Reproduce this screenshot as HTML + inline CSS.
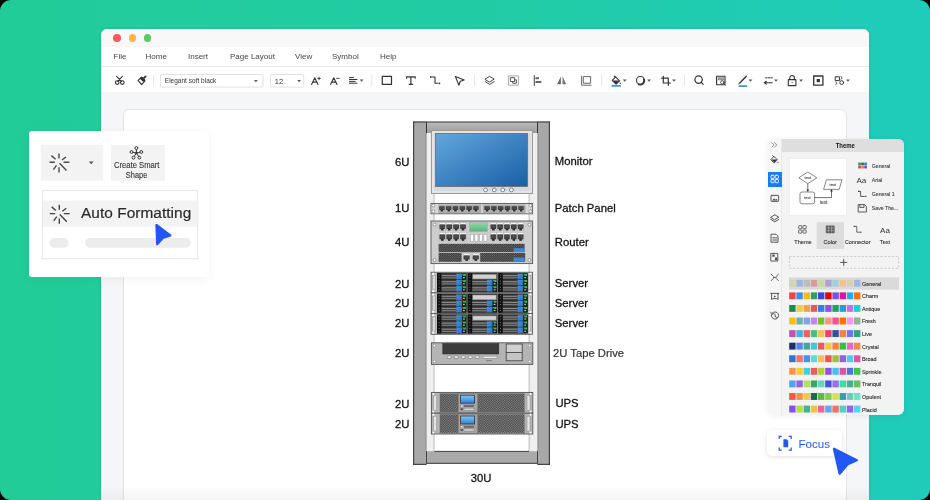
<!DOCTYPE html>
<html><head><meta charset="utf-8">
<style>
*{margin:0;padding:0;box-sizing:border-box}
html,body{width:930px;height:500px;overflow:hidden;background:#000}
body{font-family:"Liberation Sans",sans-serif;position:relative}
.abs{position:absolute}
svg,#menu{will-change:transform}
#bg{position:absolute;left:0;top:0;width:930px;height:500px;border-radius:11px;background:linear-gradient(90deg,#22cc98 0%,#21cca6 55%,#1fccbb 100%)}
#win{position:absolute;left:101px;top:29px;width:768.3px;height:480px;background:#fff;border-radius:6px 6px 0 0;overflow:hidden;box-shadow:0 0 3px rgba(0,0,0,0.12)}
#title{position:absolute;left:0;top:0;width:769px;height:18px;background:#f8f8f8}
.dot{position:absolute;top:5.2px;width:7.4px;height:7.4px;border-radius:50%}
#menu{position:absolute;left:0;top:18px;width:769px;height:20px;background:#fff;border-bottom:1px solid #e8e8e8}
#menu span{position:absolute;top:5px;font-size:8px;color:#444;line-height:10px}
#tool{position:absolute;left:0;top:38px;width:769px;height:25px;background:#fff}
#canvas{position:absolute;left:0;top:63px;width:769px;height:420px;background:#f5f6f8}
#paper{position:absolute;left:22px;top:17px;width:723.6px;height:420px;background:#fff;border:1px solid #e3e3e3;border-radius:6px}
</style></head><body>
<div id="bg"></div>
<div id="win">
  <div id="title">
    <div class="dot" style="left:12.2px;background:#fe5b5a"></div>
    <div class="dot" style="left:27.7px;background:#feb34c"></div>
    <div class="dot" style="left:42.8px;background:#5bc95f"></div>
  </div>
  <div id="menu">
    <span style="left:12.5px">File</span>
    <span style="left:44.5px">Home</span>
    <span style="left:87px">Insert</span>
    <span style="left:129px">Page Layout</span>
    <span style="left:194px">View</span>
    <span style="left:231px">Symbol</span>
    <span style="left:279px">Help</span>
  </div>
  <div id="tool"></div>
  <div id="canvas"><div id="paper"></div></div>
  <div style="position:absolute;left:0;top:457px;width:768.3px;height:14px;background:linear-gradient(180deg,rgba(0,0,0,0) 0%,rgba(0,0,0,0.045) 100%)"></div>
</div>

<svg class="abs" style="left:0;top:0" width="930" height="500" viewBox="0 0 930 500">
<g fill="none" stroke="#333" stroke-width="1.1" stroke-linecap="round" stroke-linejoin="round">
 <!-- scissors -->
 <path d="M116.6 76.4 L121.6 81.4 M122.4 76.4 L117.6 81.4"/>
 <circle cx="117.2" cy="82.6" r="1.8"/><circle cx="122.3" cy="82.6" r="1.8"/>
 <!-- brush -->
 <path d="M138 80.3 L141.4 77.3 L144.9 80.9 L141.6 84.6 Z"/>
 <path d="M140.3 78.4 L143.2 81.2 L144.8 80.2 L141.8 77.1 Z" fill="#333"/>
 <path d="M143.4 78.6 L145.6 76.4" stroke-width="1.8"/>
 <!-- A+ -->
 <path d="M311.6 84.4 L314.8 77.8 L318 84.4 M312.9 82.1 L316.7 82.1"/>
 <path d="M317.8 78.5 H320.3 M319.05 77.25 V79.75" stroke-width="0.9"/>
 <path d="M330.6 84.4 L333.8 77.8 L337 84.4 M331.9 82.1 L335.7 82.1"/>
 <path d="M336.6 78.4 H339.2" stroke-width="0.9"/>
 <!-- align -->
 <path d="M349.4 77.6 H353.4 M349.4 79.5 H357 M349.4 81.4 H355.2 M349.4 83.2 H357" stroke-width="1"/>
 <!-- rect -->
 <rect x="382.3" y="76.4" width="9.2" height="8" stroke-width="1.2"/>
 <!-- T -->
 <path d="M406.6 78.2 V76.9 H415.2 V78.2 M410.9 76.9 V84.4 M409.2 84.4 H412.6" stroke-width="1.2"/>
 <!-- connector -->
 <path d="M432.2 77 H435 V83.3 H437.6" stroke-width="1.1"/>
 <rect x="430" y="76.2" width="1.6" height="1.6" fill="#333" stroke="none"/>
 <rect x="438.6" y="82.6" width="1.6" height="1.6" fill="#333" stroke="none"/>
 <!-- pointer -->
 <path d="M455.4 76.6 L464.2 79.9 L460.3 81.3 L458.9 85.2 Z" stroke-width="1.1"/>
 <!-- layers -->
 <path d="M485.2 79.1 L489.7 76.3 L494.2 79.1 L489.7 81.9 Z M485.2 81.6 L489.7 84.4 L494.2 81.6" stroke="#444" stroke-width="1"/>
 <!-- group -->
 <rect x="508.8" y="75.9" width="9.6" height="9.3" stroke="#aaa" stroke-width="1"/>
 <rect x="510.8" y="77.7" width="3.8" height="3.8" stroke="#555" stroke-width="1"/>
 <path d="M514.6 79.8 H516.4 V83.3 H512.8 V81.5" stroke="#555" stroke-width="1"/>
 <!-- align left -->
 <path d="M534.3 75.6 V85.4" stroke="#555" stroke-width="1.1"/>
 <rect x="535.4" y="77.2" width="3.6" height="2" fill="#666" stroke="none"/>
 <rect x="535.4" y="81" width="6" height="2" fill="#666" stroke="none"/>
 <!-- flip -->
 <path d="M557.1 84.3 L560.9 76.6 V84.3 Z" fill="#666" stroke="none"/>
 <path d="M562.5 76.6 L566.3 84.3 H562.5 Z" fill="#777" stroke="none"/>
 <!-- frame -->
 <path d="M581.6 76.2 V85.2 H591" stroke="#666" stroke-width="1"/>
 <rect x="583.7" y="76.6" width="6.9" height="6.6" stroke="#666" stroke-width="1"/>
 <!-- fill bucket -->
 <path d="M612.2 80.3 L615.6 76.9 L619.5 80.8 L616.1 84.2 Z" stroke-width="1.1"/>
 <path d="M612.4 80.4 H619.3 L616.1 83.8 Z" fill="#333" stroke="none"/>
 <path d="M614.3 76.2 L615.6 77.4" />
 <circle cx="620.3" cy="83.2" r="0.7" fill="#333" stroke="none"/>
 <!-- shadow -->
 <circle cx="640.4" cy="80.4" r="3.9" stroke-width="1.1"/>
 <path d="M643.9 79.2 A3.9 3.9 0 0 1 638.6 84.2" stroke-width="1.8"/>
 <!-- crop -->
 <path d="M661.7 78.2 H668.3 V85.3 M663.3 76.3 V83 H670.4" stroke-width="1.2"/>
 <!-- search -->
 <circle cx="698.6" cy="79.6" r="3.7" stroke-width="1.2"/>
 <path d="M701.3 82.4 L703.2 84.3" stroke-width="1.2"/>
 <!-- zoom page -->
 <rect x="716.6" y="76.3" width="8.4" height="8.4" stroke-width="1.1"/>
 <rect x="717.6" y="77.3" width="6.4" height="3" fill="#999" stroke="none"/>
 <circle cx="722.4" cy="82.4" r="1.7" stroke-width="0.9" fill="#fff"/>
 <path d="M723.6 83.6 L725.3 85" stroke-width="0.9"/>
 <!-- pen -->
 <path d="M739.3 83.5 L746.3 76.3" stroke-width="1.4"/>
 <path d="M738.6 84.2 L739.8 83" stroke="#888" stroke-width="1"/>
 <!-- line style -->
 <path d="M765.5 77.8 H767 M768.2 77.8 H769.7 M770.9 77.8 H772.4" stroke-width="1"/>
 <path d="M764.3 82.7 H772.3 M766.3 81.3 L764.3 82.7 L766.3 84.1" stroke-width="1.1"/>
 <!-- lock -->
 <rect x="788.3" y="79.6" width="7.6" height="6" stroke-width="1.1"/>
 <path d="M789.8 79.6 V77.8 A2.3 2.3 0 0 1 794.4 77.8 V79.6" stroke-width="1.1"/>
 <circle cx="792.1" cy="82.5" r="0.6" fill="#333" stroke="none"/>
 <!-- focus -->
 <rect x="813.7" y="76" width="9.2" height="9.2" stroke-width="1.3"/>
 <rect x="816.7" y="79" width="3.2" height="3.2" fill="#333" stroke="none"/>
 <!-- replace -->
 <rect x="835.6" y="76.8" width="3.8" height="3.8" stroke-width="1"/>
 <circle cx="841.7" cy="82.6" r="1.9" stroke-width="1"/>
 <path d="M841 76.5 L842.2 78 L841 79.3 M835.8 82 L837 83.3 L835.8 84.4" stroke-width="0.9"/>
</g>
<g fill="#555">
 <path d="M254.00 80.00 H257.80 L255.90 82.20 Z"/>
 <path d="M297.20 80.00 H301.00 L299.10 82.20 Z"/>
 <path d="M359.70 79.50 H363.50 L361.60 81.70 Z"/>
 <path d="M622.80 79.50 H626.60 L624.70 81.70 Z"/>
 <path d="M647.10 79.50 H650.90 L649.00 81.70 Z"/>
 <path d="M672.10 79.50 H675.90 L674.00 81.70 Z"/>
 <path d="M748.60 79.50 H752.40 L750.50 81.70 Z"/>
 <path d="M774.10 79.50 H777.90 L776.00 81.70 Z"/>
 <path d="M799.10 79.50 H802.90 L801.00 81.70 Z"/>
 <path d="M846.10 79.50 H849.90 L848.00 81.70 Z"/>
</g>
<g stroke="#e6e6e6" stroke-width="1">
 <path d="M153.5 75 V86 M371.8 75 V86 M474.6 75 V86 M601.7 75 V86 M684.5 75 V86"/>
</g>
<rect x="160.5" y="74.5" width="102.6" height="12.6" rx="1.5" fill="none" stroke="#e2e2e2"/>
<rect x="270.5" y="74.5" width="33.2" height="12.6" rx="1.5" fill="none" stroke="#e2e2e2"/>
<text x="164.8" y="83.3" font-size="7.5" fill="#333" font-family="Liberation Sans" textLength="51.5" lengthAdjust="spacingAndGlyphs">Elegant soft black</text>
<text x="274.8" y="83.6" font-size="7.4" fill="#333" font-family="Liberation Sans">12</text>
<rect x="611.6" y="85.2" width="9.2" height="1.4" fill="#1a73e8"/>
<rect x="738.6" y="85.4" width="8.6" height="1.4" fill="#1a73e8"/>
</svg>
<!--RACK--><svg class="abs" style="left:0;top:0" width="930" height="500" viewBox="0 0 930 500">
<defs>
<linearGradient id="scr" x1="0" y1="0" x2="1" y2="1"><stop offset="0" stop-color="#62a8dc"/><stop offset="1" stop-color="#1a5ea6"/></linearGradient>
<linearGradient id="topbar" x1="0" y1="0" x2="0" y2="1"><stop offset="0" stop-color="#bdbdbd"/><stop offset="1" stop-color="#9c9c9c"/></linearGradient>
<linearGradient id="tag" x1="0" y1="0" x2="1" y2="1"><stop offset="0" stop-color="#4a93d8"/><stop offset="1" stop-color="#2a6fbd"/></linearGradient>
<linearGradient id="lcd" x1="0" y1="0" x2="0" y2="1"><stop offset="0" stop-color="#8fd6a4"/><stop offset="1" stop-color="#5cb67a"/></linearGradient>
<linearGradient id="blcd" x1="0" y1="0" x2="0" y2="1"><stop offset="0" stop-color="#7cc4f5"/><stop offset="1" stop-color="#2f86d6"/></linearGradient>
<pattern id="mesh" width="2.4" height="2.4" patternUnits="userSpaceOnUse"><rect width="2.4" height="2.4" fill="#8e8e8e"/><circle cx="0.6" cy="0.6" r="0.72" fill="#3e3e3e"/><circle cx="1.8" cy="1.8" r="0.72" fill="#3e3e3e"/></pattern><pattern id="mesh2" width="2.2" height="2.2" patternUnits="userSpaceOnUse"><rect width="2.2" height="2.2" fill="#7a7a7a"/><circle cx="0.55" cy="0.55" r="0.7" fill="#2e2e2e"/><circle cx="1.65" cy="1.65" r="0.7" fill="#2e2e2e"/></pattern>
</defs>
<rect x="426.5" y="133" width="111" height="318" fill="#fff"/>
<rect x="426.5" y="133" width="7.2" height="318" fill="#efefef"/>
<rect x="529.5" y="133" width="8" height="318" fill="#efefef"/>
<rect x="433.4" y="133" width="1.2" height="318" fill="#c4c4c4"/>
<rect x="528.6" y="133" width="1.2" height="318" fill="#c4c4c4"/>
<rect x="413" y="121.5" width="13.5" height="343.3" fill="#a8a8a8"/>
<rect x="537.5" y="121.5" width="12.5" height="343.3" fill="#a8a8a8"/>
<path d="M413.6 121.5 V464.4 H426.5" stroke="#444" stroke-width="1.2" fill="none"/>
<path d="M549.4 121.5 V464.4 H537.5" stroke="#444" stroke-width="1.2" fill="none"/>
<path d="M425.9 133 V451" stroke="#8e8e8e" stroke-width="1" fill="none"/>
<path d="M538.1 133 V451" stroke="#8e8e8e" stroke-width="1" fill="none"/>
<rect x="426.5" y="122" width="111" height="11" fill="url(#topbar)"/>
<path d="M413.5 122 H549.5" stroke="#333" stroke-width="1.2"/>
<path d="M426.5 122 V133 M537.5 122 V133" stroke="#333" stroke-width="1"/>
<rect x="426.5" y="451.2" width="111" height="12" fill="#a9a9a9"/>
<path d="M434.5 451.4 H529 M426.5 451 V464 M537.5 451 V464" stroke="#444" stroke-width="1"/>
<path d="M426.5 463.3 H537.5" stroke="#555" stroke-width="1.2"/>
<rect x="431.5" y="130.5" width="101" height="63" fill="#d9d9d9" stroke="#9a9a9a" stroke-width="1"/>
<rect x="433" y="132" width="98" height="60" fill="none" stroke="#efefef" stroke-width="1"/>
<rect x="435.5" y="133.5" width="92" height="53" fill="url(#scr)" stroke="#6a6a6a" stroke-width="0.8"/>
<circle cx="485.6" cy="189.9" r="1.9" fill="#fff" stroke="#555" stroke-width="0.7"/>
<circle cx="494.2" cy="189.9" r="1.9" fill="#fff" stroke="#555" stroke-width="0.7"/>
<circle cx="502.8" cy="189.9" r="1.9" fill="#fff" stroke="#555" stroke-width="0.7"/>
<circle cx="511.4" cy="189.9" r="1.9" fill="#fff" stroke="#555" stroke-width="0.7"/>
<rect x="431" y="203.4" width="101.6" height="10.4" fill="#cfcfcf" stroke="#555" stroke-width="0.9"/>
<rect x="431.5" y="204" width="6.5" height="9.3" fill="#d6d6d6"/>
<rect x="525.6" y="204" width="6.5" height="9.3" fill="#d6d6d6"/>
<circle cx="433.3" cy="205.5" r="1.5" fill="#fff" stroke="#666" stroke-width="0.6"/>
<circle cx="433.3" cy="211.3" r="1.5" fill="#fff" stroke="#666" stroke-width="0.6"/>
<circle cx="530.4" cy="205.5" r="1.5" fill="#fff" stroke="#666" stroke-width="0.6"/>
<circle cx="530.4" cy="211.3" r="1.5" fill="#fff" stroke="#666" stroke-width="0.6"/>
<rect x="438.4" y="204.6" width="87" height="8.6" fill="#a9a9a9"/>
<rect x="481.2" y="204.6" width="1.4" height="8.6" fill="#e4e4e4"/>
<rect x="439.2" y="206.2" width="5.4" height="3.85" rx="0.7" fill="#3c3c3c"/><rect x="439.9" y="206.89999999999998" width="4.0" height="2.45" fill="#4a4a4a"/><rect x="440.66" y="209.84" width="2.48" height="1.56" fill="#2a2a2a"/><rect x="439.40" y="210.70" width="1.1" height="0.7" fill="#e0e0e0"/><rect x="443.30" y="210.70" width="1.1" height="0.7" fill="#e0e0e0"/>
<rect x="484.4" y="206.2" width="5.4" height="3.85" rx="0.7" fill="#3c3c3c"/><rect x="485.09999999999997" y="206.89999999999998" width="4.0" height="2.45" fill="#4a4a4a"/><rect x="485.86" y="209.84" width="2.48" height="1.56" fill="#2a2a2a"/><rect x="484.60" y="210.70" width="1.1" height="0.7" fill="#e0e0e0"/><rect x="488.50" y="210.70" width="1.1" height="0.7" fill="#e0e0e0"/>
<rect x="446.0" y="206.2" width="5.4" height="3.85" rx="0.7" fill="#3c3c3c"/><rect x="446.7" y="206.89999999999998" width="4.0" height="2.45" fill="#4a4a4a"/><rect x="447.46" y="209.84" width="2.48" height="1.56" fill="#2a2a2a"/><rect x="446.20" y="210.70" width="1.1" height="0.7" fill="#e0e0e0"/><rect x="450.10" y="210.70" width="1.1" height="0.7" fill="#e0e0e0"/>
<rect x="491.2" y="206.2" width="5.4" height="3.85" rx="0.7" fill="#3c3c3c"/><rect x="491.9" y="206.89999999999998" width="4.0" height="2.45" fill="#4a4a4a"/><rect x="492.66" y="209.84" width="2.48" height="1.56" fill="#2a2a2a"/><rect x="491.40" y="210.70" width="1.1" height="0.7" fill="#e0e0e0"/><rect x="495.30" y="210.70" width="1.1" height="0.7" fill="#e0e0e0"/>
<rect x="452.8" y="206.2" width="5.4" height="3.85" rx="0.7" fill="#3c3c3c"/><rect x="453.5" y="206.89999999999998" width="4.0" height="2.45" fill="#4a4a4a"/><rect x="454.26" y="209.84" width="2.48" height="1.56" fill="#2a2a2a"/><rect x="453.00" y="210.70" width="1.1" height="0.7" fill="#e0e0e0"/><rect x="456.90" y="210.70" width="1.1" height="0.7" fill="#e0e0e0"/>
<rect x="498.0" y="206.2" width="5.4" height="3.85" rx="0.7" fill="#3c3c3c"/><rect x="498.7" y="206.89999999999998" width="4.0" height="2.45" fill="#4a4a4a"/><rect x="499.46" y="209.84" width="2.48" height="1.56" fill="#2a2a2a"/><rect x="498.20" y="210.70" width="1.1" height="0.7" fill="#e0e0e0"/><rect x="502.10" y="210.70" width="1.1" height="0.7" fill="#e0e0e0"/>
<rect x="459.59999999999997" y="206.2" width="5.4" height="3.85" rx="0.7" fill="#3c3c3c"/><rect x="460.29999999999995" y="206.89999999999998" width="4.0" height="2.45" fill="#4a4a4a"/><rect x="461.06" y="209.84" width="2.48" height="1.56" fill="#2a2a2a"/><rect x="459.80" y="210.70" width="1.1" height="0.7" fill="#e0e0e0"/><rect x="463.70" y="210.70" width="1.1" height="0.7" fill="#e0e0e0"/>
<rect x="504.79999999999995" y="206.2" width="5.4" height="3.85" rx="0.7" fill="#3c3c3c"/><rect x="505.49999999999994" y="206.89999999999998" width="4.0" height="2.45" fill="#4a4a4a"/><rect x="506.26" y="209.84" width="2.48" height="1.56" fill="#2a2a2a"/><rect x="505.00" y="210.70" width="1.1" height="0.7" fill="#e0e0e0"/><rect x="508.90" y="210.70" width="1.1" height="0.7" fill="#e0e0e0"/>
<rect x="466.4" y="206.2" width="5.4" height="3.85" rx="0.7" fill="#3c3c3c"/><rect x="467.09999999999997" y="206.89999999999998" width="4.0" height="2.45" fill="#4a4a4a"/><rect x="467.86" y="209.84" width="2.48" height="1.56" fill="#2a2a2a"/><rect x="466.60" y="210.70" width="1.1" height="0.7" fill="#e0e0e0"/><rect x="470.50" y="210.70" width="1.1" height="0.7" fill="#e0e0e0"/>
<rect x="511.59999999999997" y="206.2" width="5.4" height="3.85" rx="0.7" fill="#3c3c3c"/><rect x="512.3" y="206.89999999999998" width="4.0" height="2.45" fill="#4a4a4a"/><rect x="513.06" y="209.84" width="2.48" height="1.56" fill="#2a2a2a"/><rect x="511.80" y="210.70" width="1.1" height="0.7" fill="#e0e0e0"/><rect x="515.70" y="210.70" width="1.1" height="0.7" fill="#e0e0e0"/>
<rect x="473.2" y="206.2" width="5.4" height="3.85" rx="0.7" fill="#3c3c3c"/><rect x="473.9" y="206.89999999999998" width="4.0" height="2.45" fill="#4a4a4a"/><rect x="474.66" y="209.84" width="2.48" height="1.56" fill="#2a2a2a"/><rect x="473.40" y="210.70" width="1.1" height="0.7" fill="#e0e0e0"/><rect x="477.30" y="210.70" width="1.1" height="0.7" fill="#e0e0e0"/>
<rect x="518.4" y="206.2" width="5.4" height="3.85" rx="0.7" fill="#3c3c3c"/><rect x="519.1" y="206.89999999999998" width="4.0" height="2.45" fill="#4a4a4a"/><rect x="519.86" y="209.84" width="2.48" height="1.56" fill="#2a2a2a"/><rect x="518.60" y="210.70" width="1.1" height="0.7" fill="#e0e0e0"/><rect x="522.50" y="210.70" width="1.1" height="0.7" fill="#e0e0e0"/>
<rect x="431" y="221" width="101.6" height="42.6" fill="#cdcdcd" stroke="#555" stroke-width="0.9"/>
<circle cx="434.6" cy="224.6" r="1.5" fill="#fff" stroke="#666" stroke-width="0.6"/>
<circle cx="434.6" cy="260" r="1.5" fill="#fff" stroke="#666" stroke-width="0.6"/>
<circle cx="529.4" cy="224.6" r="1.5" fill="#fff" stroke="#666" stroke-width="0.6"/>
<circle cx="529.4" cy="260" r="1.5" fill="#fff" stroke="#666" stroke-width="0.6"/>
<rect x="438.9" y="222.6" width="6.8" height="8.4" fill="#b9b9b9"/><rect x="439.5" y="223.0" width="5.6" height="1.2" fill="#f6f6f6"/><rect x="439.5" y="224.6" width="5.6" height="4.29" rx="0.7" fill="#3c3c3c"/><rect x="440.2" y="225.29999999999998" width="4.199999999999999" height="2.89" fill="#4a4a4a"/><rect x="441.01" y="228.66" width="2.58" height="1.74" fill="#2a2a2a"/><rect x="439.70" y="229.70" width="1.1" height="0.7" fill="#e0e0e0"/><rect x="443.80" y="229.70" width="1.1" height="0.7" fill="#e0e0e0"/>
<rect x="438.9" y="232.4" width="6.8" height="9.0" fill="#b9b9b9"/><rect x="439.5" y="232.8" width="5.6" height="1.2" fill="#f6f6f6"/><rect x="439.5" y="234.4" width="5.6" height="4.74" rx="0.7" fill="#3c3c3c"/><rect x="440.2" y="235.1" width="4.199999999999999" height="3.34" fill="#4a4a4a"/><rect x="441.01" y="238.88" width="2.58" height="1.92" fill="#2a2a2a"/><rect x="439.70" y="240.10" width="1.1" height="0.7" fill="#e0e0e0"/><rect x="443.80" y="240.10" width="1.1" height="0.7" fill="#e0e0e0"/>
<rect x="445.79999999999995" y="222.6" width="6.8" height="8.4" fill="#b9b9b9"/><rect x="446.4" y="223.0" width="5.6" height="1.2" fill="#f6f6f6"/><rect x="446.4" y="224.6" width="5.6" height="4.29" rx="0.7" fill="#3c3c3c"/><rect x="447.09999999999997" y="225.29999999999998" width="4.199999999999999" height="2.89" fill="#4a4a4a"/><rect x="447.91" y="228.66" width="2.58" height="1.74" fill="#2a2a2a"/><rect x="446.60" y="229.70" width="1.1" height="0.7" fill="#e0e0e0"/><rect x="450.70" y="229.70" width="1.1" height="0.7" fill="#e0e0e0"/>
<rect x="445.79999999999995" y="232.4" width="6.8" height="9.0" fill="#b9b9b9"/><rect x="446.4" y="232.8" width="5.6" height="1.2" fill="#f6f6f6"/><rect x="446.4" y="234.4" width="5.6" height="4.74" rx="0.7" fill="#3c3c3c"/><rect x="447.09999999999997" y="235.1" width="4.199999999999999" height="3.34" fill="#4a4a4a"/><rect x="447.91" y="238.88" width="2.58" height="1.92" fill="#2a2a2a"/><rect x="446.60" y="240.10" width="1.1" height="0.7" fill="#e0e0e0"/><rect x="450.70" y="240.10" width="1.1" height="0.7" fill="#e0e0e0"/>
<rect x="452.7" y="222.6" width="6.8" height="8.4" fill="#b9b9b9"/><rect x="453.3" y="223.0" width="5.6" height="1.2" fill="#f6f6f6"/><rect x="453.3" y="224.6" width="5.6" height="4.29" rx="0.7" fill="#3c3c3c"/><rect x="454.0" y="225.29999999999998" width="4.199999999999999" height="2.89" fill="#4a4a4a"/><rect x="454.81" y="228.66" width="2.58" height="1.74" fill="#2a2a2a"/><rect x="453.50" y="229.70" width="1.1" height="0.7" fill="#e0e0e0"/><rect x="457.60" y="229.70" width="1.1" height="0.7" fill="#e0e0e0"/>
<rect x="452.7" y="232.4" width="6.8" height="9.0" fill="#b9b9b9"/><rect x="453.3" y="232.8" width="5.6" height="1.2" fill="#f6f6f6"/><rect x="453.3" y="234.4" width="5.6" height="4.74" rx="0.7" fill="#3c3c3c"/><rect x="454.0" y="235.1" width="4.199999999999999" height="3.34" fill="#4a4a4a"/><rect x="454.81" y="238.88" width="2.58" height="1.92" fill="#2a2a2a"/><rect x="453.50" y="240.10" width="1.1" height="0.7" fill="#e0e0e0"/><rect x="457.60" y="240.10" width="1.1" height="0.7" fill="#e0e0e0"/>
<rect x="459.59999999999997" y="222.6" width="6.8" height="8.4" fill="#b9b9b9"/><rect x="460.2" y="223.0" width="5.6" height="1.2" fill="#f6f6f6"/><rect x="460.2" y="224.6" width="5.6" height="4.29" rx="0.7" fill="#3c3c3c"/><rect x="460.9" y="225.29999999999998" width="4.199999999999999" height="2.89" fill="#4a4a4a"/><rect x="461.71" y="228.66" width="2.58" height="1.74" fill="#2a2a2a"/><rect x="460.40" y="229.70" width="1.1" height="0.7" fill="#e0e0e0"/><rect x="464.50" y="229.70" width="1.1" height="0.7" fill="#e0e0e0"/>
<rect x="459.59999999999997" y="232.4" width="6.8" height="9.0" fill="#b9b9b9"/><rect x="460.2" y="232.8" width="5.6" height="1.2" fill="#f6f6f6"/><rect x="460.2" y="234.4" width="5.6" height="4.74" rx="0.7" fill="#3c3c3c"/><rect x="460.9" y="235.1" width="4.199999999999999" height="3.34" fill="#4a4a4a"/><rect x="461.71" y="238.88" width="2.58" height="1.92" fill="#2a2a2a"/><rect x="460.40" y="240.10" width="1.1" height="0.7" fill="#e0e0e0"/><rect x="464.50" y="240.10" width="1.1" height="0.7" fill="#e0e0e0"/>
<rect x="490.0" y="222.6" width="6.8" height="8.4" fill="#b9b9b9"/><rect x="490.6" y="223.0" width="5.6" height="1.2" fill="#f6f6f6"/><rect x="490.6" y="224.6" width="5.6" height="4.29" rx="0.7" fill="#3c3c3c"/><rect x="491.3" y="225.29999999999998" width="4.199999999999999" height="2.89" fill="#4a4a4a"/><rect x="492.11" y="228.66" width="2.58" height="1.74" fill="#2a2a2a"/><rect x="490.80" y="229.70" width="1.1" height="0.7" fill="#e0e0e0"/><rect x="494.90" y="229.70" width="1.1" height="0.7" fill="#e0e0e0"/>
<rect x="490.0" y="232.4" width="6.8" height="9.0" fill="#b9b9b9"/><rect x="490.6" y="232.8" width="5.6" height="1.2" fill="#f6f6f6"/><rect x="490.6" y="234.4" width="5.6" height="4.74" rx="0.7" fill="#3c3c3c"/><rect x="491.3" y="235.1" width="4.199999999999999" height="3.34" fill="#4a4a4a"/><rect x="492.11" y="238.88" width="2.58" height="1.92" fill="#2a2a2a"/><rect x="490.80" y="240.10" width="1.1" height="0.7" fill="#e0e0e0"/><rect x="494.90" y="240.10" width="1.1" height="0.7" fill="#e0e0e0"/>
<rect x="496.8" y="222.6" width="6.8" height="8.4" fill="#b9b9b9"/><rect x="497.40000000000003" y="223.0" width="5.6" height="1.2" fill="#f6f6f6"/><rect x="497.40000000000003" y="224.6" width="5.6" height="4.29" rx="0.7" fill="#3c3c3c"/><rect x="498.1" y="225.29999999999998" width="4.199999999999999" height="2.89" fill="#4a4a4a"/><rect x="498.91" y="228.66" width="2.58" height="1.74" fill="#2a2a2a"/><rect x="497.60" y="229.70" width="1.1" height="0.7" fill="#e0e0e0"/><rect x="501.70" y="229.70" width="1.1" height="0.7" fill="#e0e0e0"/>
<rect x="496.8" y="232.4" width="6.8" height="9.0" fill="#b9b9b9"/><rect x="497.40000000000003" y="232.8" width="5.6" height="1.2" fill="#f6f6f6"/><rect x="497.40000000000003" y="234.4" width="5.6" height="4.74" rx="0.7" fill="#3c3c3c"/><rect x="498.1" y="235.1" width="4.199999999999999" height="3.34" fill="#4a4a4a"/><rect x="498.91" y="238.88" width="2.58" height="1.92" fill="#2a2a2a"/><rect x="497.60" y="240.10" width="1.1" height="0.7" fill="#e0e0e0"/><rect x="501.70" y="240.10" width="1.1" height="0.7" fill="#e0e0e0"/>
<rect x="503.6" y="222.6" width="6.8" height="8.4" fill="#b9b9b9"/><rect x="504.20000000000005" y="223.0" width="5.6" height="1.2" fill="#f6f6f6"/><rect x="504.20000000000005" y="224.6" width="5.6" height="4.29" rx="0.7" fill="#3c3c3c"/><rect x="504.90000000000003" y="225.29999999999998" width="4.199999999999999" height="2.89" fill="#4a4a4a"/><rect x="505.71" y="228.66" width="2.58" height="1.74" fill="#2a2a2a"/><rect x="504.40" y="229.70" width="1.1" height="0.7" fill="#e0e0e0"/><rect x="508.50" y="229.70" width="1.1" height="0.7" fill="#e0e0e0"/>
<rect x="503.6" y="232.4" width="6.8" height="9.0" fill="#b9b9b9"/><rect x="504.20000000000005" y="232.8" width="5.6" height="1.2" fill="#f6f6f6"/><rect x="504.20000000000005" y="234.4" width="5.6" height="4.74" rx="0.7" fill="#3c3c3c"/><rect x="504.90000000000003" y="235.1" width="4.199999999999999" height="3.34" fill="#4a4a4a"/><rect x="505.71" y="238.88" width="2.58" height="1.92" fill="#2a2a2a"/><rect x="504.40" y="240.10" width="1.1" height="0.7" fill="#e0e0e0"/><rect x="508.50" y="240.10" width="1.1" height="0.7" fill="#e0e0e0"/>
<rect x="510.4" y="222.6" width="6.8" height="8.4" fill="#b9b9b9"/><rect x="511.0" y="223.0" width="5.6" height="1.2" fill="#f6f6f6"/><rect x="511.0" y="224.6" width="5.6" height="4.29" rx="0.7" fill="#3c3c3c"/><rect x="511.7" y="225.29999999999998" width="4.199999999999999" height="2.89" fill="#4a4a4a"/><rect x="512.51" y="228.66" width="2.58" height="1.74" fill="#2a2a2a"/><rect x="511.20" y="229.70" width="1.1" height="0.7" fill="#e0e0e0"/><rect x="515.30" y="229.70" width="1.1" height="0.7" fill="#e0e0e0"/>
<rect x="510.4" y="232.4" width="6.8" height="9.0" fill="#b9b9b9"/><rect x="511.0" y="232.8" width="5.6" height="1.2" fill="#f6f6f6"/><rect x="511.0" y="234.4" width="5.6" height="4.74" rx="0.7" fill="#3c3c3c"/><rect x="511.7" y="235.1" width="4.199999999999999" height="3.34" fill="#4a4a4a"/><rect x="512.51" y="238.88" width="2.58" height="1.92" fill="#2a2a2a"/><rect x="511.20" y="240.10" width="1.1" height="0.7" fill="#e0e0e0"/><rect x="515.30" y="240.10" width="1.1" height="0.7" fill="#e0e0e0"/>
<rect x="517.2" y="222.6" width="6.8" height="8.4" fill="#b9b9b9"/><rect x="517.8000000000001" y="223.0" width="5.6" height="1.2" fill="#f6f6f6"/><rect x="517.8000000000001" y="224.6" width="5.6" height="4.29" rx="0.7" fill="#3c3c3c"/><rect x="518.5000000000001" y="225.29999999999998" width="4.199999999999999" height="2.89" fill="#4a4a4a"/><rect x="519.31" y="228.66" width="2.58" height="1.74" fill="#2a2a2a"/><rect x="518.00" y="229.70" width="1.1" height="0.7" fill="#e0e0e0"/><rect x="522.10" y="229.70" width="1.1" height="0.7" fill="#e0e0e0"/>
<rect x="517.2" y="232.4" width="6.8" height="9.0" fill="#b9b9b9"/><rect x="517.8000000000001" y="232.8" width="5.6" height="1.2" fill="#f6f6f6"/><rect x="517.8000000000001" y="234.4" width="5.6" height="4.74" rx="0.7" fill="#3c3c3c"/><rect x="518.5000000000001" y="235.1" width="4.199999999999999" height="3.34" fill="#4a4a4a"/><rect x="519.31" y="238.88" width="2.58" height="1.92" fill="#2a2a2a"/><rect x="518.00" y="240.10" width="1.1" height="0.7" fill="#e0e0e0"/><rect x="522.10" y="240.10" width="1.1" height="0.7" fill="#e0e0e0"/>
<rect x="469.2" y="222.4" width="18.6" height="9.4" fill="#a8a8a8"/>
<rect x="470" y="223" width="17" height="8.2" fill="url(#lcd)"/>
<rect x="470.4" y="234.2" width="3" height="7" fill="#fff" stroke="#999" stroke-width="0.5"/>
<rect x="474.9" y="234.2" width="3" height="7" fill="#fff" stroke="#999" stroke-width="0.5"/>
<rect x="479.4" y="234.2" width="3" height="7" fill="#fff" stroke="#999" stroke-width="0.5"/>
<rect x="483.9" y="234.2" width="3" height="7" fill="#fff" stroke="#999" stroke-width="0.5"/>
<rect x="438.6" y="243.8" width="86" height="8.4" fill="url(#mesh2)"/>
<rect x="513.6" y="248.2" width="11" height="3.9" fill="#3b8ddb"/>
<rect x="438.6" y="253" width="23" height="8.8" fill="url(#mesh2)"/>
<rect x="480.2" y="253" width="45" height="8.8" fill="url(#mesh2)"/>
<rect x="513.6" y="257.6" width="11" height="4" fill="#3b8ddb"/>
<rect x="463.0" y="253.4" width="7.2" height="8.0" fill="#b9b9b9"/><rect x="463.6" y="253.8" width="6" height="1.2" fill="#f6f6f6"/><rect x="463.6" y="255.4" width="6" height="4.00" rx="0.7" fill="#3c3c3c"/><rect x="464.3" y="256.1" width="4.6" height="2.60" fill="#4a4a4a"/><rect x="465.22" y="259.18" width="2.76" height="1.62" fill="#2a2a2a"/><rect x="463.80" y="260.10" width="1.1" height="0.7" fill="#e0e0e0"/><rect x="468.30" y="260.10" width="1.1" height="0.7" fill="#e0e0e0"/>
<rect x="472.2" y="253.4" width="7.2" height="8.0" fill="#b9b9b9"/><rect x="472.8" y="253.8" width="6" height="1.2" fill="#f6f6f6"/><rect x="472.8" y="255.4" width="6" height="4.00" rx="0.7" fill="#3c3c3c"/><rect x="473.5" y="256.1" width="4.6" height="2.60" fill="#4a4a4a"/><rect x="474.42" y="259.18" width="2.76" height="1.62" fill="#2a2a2a"/><rect x="473.00" y="260.10" width="1.1" height="0.7" fill="#e0e0e0"/><rect x="477.50" y="260.10" width="1.1" height="0.7" fill="#e0e0e0"/>
<rect x="431" y="272.2" width="101.6" height="20.7" fill="#8e8e8e" stroke="#555" stroke-width="0.8"/>
<rect x="431.6" y="272.8" width="5.4" height="19.5" fill="#c2c2c2"/>
<rect x="432.8" y="275.2" width="2.6" height="14.6" fill="#dadada" stroke="#8a8a8a" stroke-width="0.5"/>
<rect x="527" y="272.8" width="5" height="19.5" fill="#c2c2c2"/>
<rect x="528.2" y="275.2" width="2.6" height="14.6" fill="#dadada" stroke="#8a8a8a" stroke-width="0.5"/>
<circle cx="433.2" cy="273.8" r="1.1" fill="#fff"/><circle cx="433.2" cy="291.2" r="1.1" fill="#fff"/>
<circle cx="530.4" cy="273.8" r="1.1" fill="#fff"/><circle cx="530.4" cy="291.2" r="1.1" fill="#fff"/>
<rect x="437" y="273.2" width="29.6" height="18.8" fill="#222"/>
<rect x="437" y="273.2" width="4.2" height="18.8" fill="#111"/>
<circle cx="439.1" cy="275.0" r="0.5" fill="#888"/><circle cx="439.1" cy="277.6" r="0.5" fill="#888"/>
<rect x="441.6" y="273.8" width="14.6" height="5.6" fill="#3a3a3a"/>
<rect x="441.6" y="275.0" width="14.6" height="1.2" fill="#8a8a8a"/>
<rect x="441.6" y="277.2" width="14.6" height="1.2" fill="#7a7a7a"/>
<rect x="456.2" y="273.8" width="5.8" height="5.6" fill="url(#tag)"/>
<rect x="462" y="273.8" width="4" height="5.6" fill="#1a1a1a"/>
<path d="M462.2 274.0 H465.8 V276.0 H463.4 Z" fill="#2fbf55"/>
<rect x="463" y="277.0" width="1.8" height="1.3" fill="#bbb"/>
<circle cx="439.1" cy="281.1" r="0.5" fill="#888"/><circle cx="439.1" cy="283.70000000000005" r="0.5" fill="#888"/>
<rect x="441.6" y="279.90000000000003" width="14.6" height="5.6" fill="#3a3a3a"/>
<rect x="441.6" y="281.1" width="14.6" height="1.2" fill="#8a8a8a"/>
<rect x="441.6" y="283.3" width="14.6" height="1.2" fill="#7a7a7a"/>
<rect x="456.2" y="279.90000000000003" width="5.8" height="5.6" fill="url(#tag)"/>
<rect x="462" y="279.90000000000003" width="4" height="5.6" fill="#1a1a1a"/>
<path d="M462.2 280.1 H465.8 V282.1 H463.4 Z" fill="#2fbf55"/>
<rect x="463" y="283.1" width="1.8" height="1.3" fill="#bbb"/>
<circle cx="439.1" cy="287.2" r="0.5" fill="#888"/><circle cx="439.1" cy="289.8" r="0.5" fill="#888"/>
<rect x="441.6" y="286.0" width="14.6" height="5.6" fill="#3a3a3a"/>
<rect x="441.6" y="287.2" width="14.6" height="1.2" fill="#8a8a8a"/>
<rect x="441.6" y="289.4" width="14.6" height="1.2" fill="#7a7a7a"/>
<rect x="456.2" y="286.0" width="5.8" height="5.6" fill="url(#tag)"/>
<rect x="462" y="286.0" width="4" height="5.6" fill="#1a1a1a"/>
<path d="M462.2 286.2 H465.8 V288.2 H463.4 Z" fill="#2fbf55"/>
<rect x="463" y="289.2" width="1.8" height="1.3" fill="#bbb"/>
<rect x="467.7" y="273.2" width="29.6" height="18.8" fill="#222"/>
<rect x="467.7" y="273.2" width="4.2" height="18.8" fill="#111"/>
<circle cx="469.8" cy="275.0" r="0.5" fill="#888"/><circle cx="469.8" cy="277.6" r="0.5" fill="#888"/>
<rect x="472.3" y="274.1" width="24.4" height="5.2" fill="#a8a8a8" stroke="#555" stroke-width="0.4"/>
<rect x="473.09999999999997" y="274.90000000000003" width="22.8" height="3.4" fill="#d2d2d2"/>
<circle cx="469.8" cy="281.1" r="0.5" fill="#888"/><circle cx="469.8" cy="283.70000000000005" r="0.5" fill="#888"/>
<rect x="472.3" y="279.90000000000003" width="14.6" height="5.6" fill="#3a3a3a"/>
<rect x="472.3" y="281.1" width="14.6" height="1.2" fill="#8a8a8a"/>
<rect x="472.3" y="283.3" width="14.6" height="1.2" fill="#7a7a7a"/>
<rect x="486.9" y="279.90000000000003" width="5.8" height="5.6" fill="url(#tag)"/>
<rect x="492.7" y="279.90000000000003" width="4" height="5.6" fill="#1a1a1a"/>
<path d="M492.9 280.1 H496.5 V282.1 H494.09999999999997 Z" fill="#2fbf55"/>
<rect x="493.7" y="283.1" width="1.8" height="1.3" fill="#bbb"/>
<circle cx="469.8" cy="287.2" r="0.5" fill="#888"/><circle cx="469.8" cy="289.8" r="0.5" fill="#888"/>
<rect x="472.3" y="286.0" width="14.6" height="5.6" fill="#3a3a3a"/>
<rect x="472.3" y="287.2" width="14.6" height="1.2" fill="#8a8a8a"/>
<rect x="472.3" y="289.4" width="14.6" height="1.2" fill="#7a7a7a"/>
<rect x="486.9" y="286.0" width="5.8" height="5.6" fill="url(#tag)"/>
<rect x="492.7" y="286.0" width="4" height="5.6" fill="#1a1a1a"/>
<path d="M492.9 286.2 H496.5 V288.2 H494.09999999999997 Z" fill="#2fbf55"/>
<rect x="493.7" y="289.2" width="1.8" height="1.3" fill="#bbb"/>
<rect x="498.3" y="273.2" width="29.6" height="18.8" fill="#222"/>
<rect x="498.3" y="273.2" width="4.2" height="18.8" fill="#111"/>
<circle cx="500.40000000000003" cy="275.0" r="0.5" fill="#888"/><circle cx="500.40000000000003" cy="277.6" r="0.5" fill="#888"/>
<rect x="502.90000000000003" y="273.8" width="14.6" height="5.6" fill="#3a3a3a"/>
<rect x="502.90000000000003" y="275.0" width="14.6" height="1.2" fill="#8a8a8a"/>
<rect x="502.90000000000003" y="277.2" width="14.6" height="1.2" fill="#7a7a7a"/>
<rect x="517.5" y="273.8" width="5.8" height="5.6" fill="url(#tag)"/>
<rect x="523.3" y="273.8" width="4" height="5.6" fill="#1a1a1a"/>
<path d="M523.5 274.0 H527.1 V276.0 H524.7 Z" fill="#2fbf55"/>
<rect x="524.3" y="277.0" width="1.8" height="1.3" fill="#bbb"/>
<circle cx="500.40000000000003" cy="281.1" r="0.5" fill="#888"/><circle cx="500.40000000000003" cy="283.70000000000005" r="0.5" fill="#888"/>
<rect x="502.90000000000003" y="279.90000000000003" width="14.6" height="5.6" fill="#3a3a3a"/>
<rect x="502.90000000000003" y="281.1" width="14.6" height="1.2" fill="#8a8a8a"/>
<rect x="502.90000000000003" y="283.3" width="14.6" height="1.2" fill="#7a7a7a"/>
<rect x="517.5" y="279.90000000000003" width="5.8" height="5.6" fill="url(#tag)"/>
<rect x="523.3" y="279.90000000000003" width="4" height="5.6" fill="#1a1a1a"/>
<path d="M523.5 280.1 H527.1 V282.1 H524.7 Z" fill="#2fbf55"/>
<rect x="524.3" y="283.1" width="1.8" height="1.3" fill="#bbb"/>
<circle cx="500.40000000000003" cy="287.2" r="0.5" fill="#888"/><circle cx="500.40000000000003" cy="289.8" r="0.5" fill="#888"/>
<rect x="502.90000000000003" y="286.0" width="14.6" height="5.6" fill="#3a3a3a"/>
<rect x="502.90000000000003" y="287.2" width="14.6" height="1.2" fill="#8a8a8a"/>
<rect x="502.90000000000003" y="289.4" width="14.6" height="1.2" fill="#7a7a7a"/>
<rect x="517.5" y="286.0" width="5.8" height="5.6" fill="url(#tag)"/>
<rect x="523.3" y="286.0" width="4" height="5.6" fill="#1a1a1a"/>
<path d="M523.5 286.2 H527.1 V288.2 H524.7 Z" fill="#2fbf55"/>
<rect x="524.3" y="289.2" width="1.8" height="1.3" fill="#bbb"/>
<rect x="431" y="292.9" width="101.6" height="20.7" fill="#8e8e8e" stroke="#555" stroke-width="0.8"/>
<rect x="431.6" y="293.5" width="5.4" height="19.5" fill="#c2c2c2"/>
<rect x="432.8" y="295.9" width="2.6" height="14.6" fill="#dadada" stroke="#8a8a8a" stroke-width="0.5"/>
<rect x="527" y="293.5" width="5" height="19.5" fill="#c2c2c2"/>
<rect x="528.2" y="295.9" width="2.6" height="14.6" fill="#dadada" stroke="#8a8a8a" stroke-width="0.5"/>
<circle cx="433.2" cy="294.5" r="1.1" fill="#fff"/><circle cx="433.2" cy="311.9" r="1.1" fill="#fff"/>
<circle cx="530.4" cy="294.5" r="1.1" fill="#fff"/><circle cx="530.4" cy="311.9" r="1.1" fill="#fff"/>
<rect x="437" y="293.9" width="29.6" height="18.8" fill="#222"/>
<rect x="437" y="293.9" width="4.2" height="18.8" fill="#111"/>
<circle cx="439.1" cy="295.7" r="0.5" fill="#888"/><circle cx="439.1" cy="298.3" r="0.5" fill="#888"/>
<rect x="441.6" y="294.5" width="14.6" height="5.6" fill="#3a3a3a"/>
<rect x="441.6" y="295.7" width="14.6" height="1.2" fill="#8a8a8a"/>
<rect x="441.6" y="297.9" width="14.6" height="1.2" fill="#7a7a7a"/>
<rect x="456.2" y="294.5" width="5.8" height="5.6" fill="url(#tag)"/>
<rect x="462" y="294.5" width="4" height="5.6" fill="#1a1a1a"/>
<path d="M462.2 294.7 H465.8 V296.7 H463.4 Z" fill="#2fbf55"/>
<rect x="463" y="297.7" width="1.8" height="1.3" fill="#bbb"/>
<circle cx="439.1" cy="301.8" r="0.5" fill="#888"/><circle cx="439.1" cy="304.40000000000003" r="0.5" fill="#888"/>
<rect x="441.6" y="300.6" width="14.6" height="5.6" fill="#3a3a3a"/>
<rect x="441.6" y="301.8" width="14.6" height="1.2" fill="#8a8a8a"/>
<rect x="441.6" y="304.0" width="14.6" height="1.2" fill="#7a7a7a"/>
<rect x="456.2" y="300.6" width="5.8" height="5.6" fill="url(#tag)"/>
<rect x="462" y="300.6" width="4" height="5.6" fill="#1a1a1a"/>
<path d="M462.2 300.8 H465.8 V302.8 H463.4 Z" fill="#2fbf55"/>
<rect x="463" y="303.8" width="1.8" height="1.3" fill="#bbb"/>
<circle cx="439.1" cy="307.9" r="0.5" fill="#888"/><circle cx="439.1" cy="310.5" r="0.5" fill="#888"/>
<rect x="441.6" y="306.7" width="14.6" height="5.6" fill="#3a3a3a"/>
<rect x="441.6" y="307.9" width="14.6" height="1.2" fill="#8a8a8a"/>
<rect x="441.6" y="310.09999999999997" width="14.6" height="1.2" fill="#7a7a7a"/>
<rect x="456.2" y="306.7" width="5.8" height="5.6" fill="url(#tag)"/>
<rect x="462" y="306.7" width="4" height="5.6" fill="#1a1a1a"/>
<path d="M462.2 306.9 H465.8 V308.9 H463.4 Z" fill="#2fbf55"/>
<rect x="463" y="309.9" width="1.8" height="1.3" fill="#bbb"/>
<rect x="467.7" y="293.9" width="29.6" height="18.8" fill="#222"/>
<rect x="467.7" y="293.9" width="4.2" height="18.8" fill="#111"/>
<circle cx="469.8" cy="295.7" r="0.5" fill="#888"/><circle cx="469.8" cy="298.3" r="0.5" fill="#888"/>
<rect x="472.3" y="294.8" width="24.4" height="5.2" fill="#a8a8a8" stroke="#555" stroke-width="0.4"/>
<rect x="473.09999999999997" y="295.6" width="22.8" height="3.4" fill="#d2d2d2"/>
<circle cx="469.8" cy="301.8" r="0.5" fill="#888"/><circle cx="469.8" cy="304.40000000000003" r="0.5" fill="#888"/>
<rect x="472.3" y="300.6" width="14.6" height="5.6" fill="#3a3a3a"/>
<rect x="472.3" y="301.8" width="14.6" height="1.2" fill="#8a8a8a"/>
<rect x="472.3" y="304.0" width="14.6" height="1.2" fill="#7a7a7a"/>
<rect x="486.9" y="300.6" width="5.8" height="5.6" fill="url(#tag)"/>
<rect x="492.7" y="300.6" width="4" height="5.6" fill="#1a1a1a"/>
<path d="M492.9 300.8 H496.5 V302.8 H494.09999999999997 Z" fill="#2fbf55"/>
<rect x="493.7" y="303.8" width="1.8" height="1.3" fill="#bbb"/>
<circle cx="469.8" cy="307.9" r="0.5" fill="#888"/><circle cx="469.8" cy="310.5" r="0.5" fill="#888"/>
<rect x="472.3" y="306.7" width="14.6" height="5.6" fill="#3a3a3a"/>
<rect x="472.3" y="307.9" width="14.6" height="1.2" fill="#8a8a8a"/>
<rect x="472.3" y="310.09999999999997" width="14.6" height="1.2" fill="#7a7a7a"/>
<rect x="486.9" y="306.7" width="5.8" height="5.6" fill="url(#tag)"/>
<rect x="492.7" y="306.7" width="4" height="5.6" fill="#1a1a1a"/>
<path d="M492.9 306.9 H496.5 V308.9 H494.09999999999997 Z" fill="#2fbf55"/>
<rect x="493.7" y="309.9" width="1.8" height="1.3" fill="#bbb"/>
<rect x="498.3" y="293.9" width="29.6" height="18.8" fill="#222"/>
<rect x="498.3" y="293.9" width="4.2" height="18.8" fill="#111"/>
<circle cx="500.40000000000003" cy="295.7" r="0.5" fill="#888"/><circle cx="500.40000000000003" cy="298.3" r="0.5" fill="#888"/>
<rect x="502.90000000000003" y="294.5" width="14.6" height="5.6" fill="#3a3a3a"/>
<rect x="502.90000000000003" y="295.7" width="14.6" height="1.2" fill="#8a8a8a"/>
<rect x="502.90000000000003" y="297.9" width="14.6" height="1.2" fill="#7a7a7a"/>
<rect x="517.5" y="294.5" width="5.8" height="5.6" fill="url(#tag)"/>
<rect x="523.3" y="294.5" width="4" height="5.6" fill="#1a1a1a"/>
<path d="M523.5 294.7 H527.1 V296.7 H524.7 Z" fill="#2fbf55"/>
<rect x="524.3" y="297.7" width="1.8" height="1.3" fill="#bbb"/>
<circle cx="500.40000000000003" cy="301.8" r="0.5" fill="#888"/><circle cx="500.40000000000003" cy="304.40000000000003" r="0.5" fill="#888"/>
<rect x="502.90000000000003" y="300.6" width="14.6" height="5.6" fill="#3a3a3a"/>
<rect x="502.90000000000003" y="301.8" width="14.6" height="1.2" fill="#8a8a8a"/>
<rect x="502.90000000000003" y="304.0" width="14.6" height="1.2" fill="#7a7a7a"/>
<rect x="517.5" y="300.6" width="5.8" height="5.6" fill="url(#tag)"/>
<rect x="523.3" y="300.6" width="4" height="5.6" fill="#1a1a1a"/>
<path d="M523.5 300.8 H527.1 V302.8 H524.7 Z" fill="#2fbf55"/>
<rect x="524.3" y="303.8" width="1.8" height="1.3" fill="#bbb"/>
<circle cx="500.40000000000003" cy="307.9" r="0.5" fill="#888"/><circle cx="500.40000000000003" cy="310.5" r="0.5" fill="#888"/>
<rect x="502.90000000000003" y="306.7" width="14.6" height="5.6" fill="#3a3a3a"/>
<rect x="502.90000000000003" y="307.9" width="14.6" height="1.2" fill="#8a8a8a"/>
<rect x="502.90000000000003" y="310.09999999999997" width="14.6" height="1.2" fill="#7a7a7a"/>
<rect x="517.5" y="306.7" width="5.8" height="5.6" fill="url(#tag)"/>
<rect x="523.3" y="306.7" width="4" height="5.6" fill="#1a1a1a"/>
<path d="M523.5 306.9 H527.1 V308.9 H524.7 Z" fill="#2fbf55"/>
<rect x="524.3" y="309.9" width="1.8" height="1.3" fill="#bbb"/>
<rect x="431" y="313.59999999999997" width="101.6" height="20.7" fill="#8e8e8e" stroke="#555" stroke-width="0.8"/>
<rect x="431.6" y="314.2" width="5.4" height="19.5" fill="#c2c2c2"/>
<rect x="432.8" y="316.59999999999997" width="2.6" height="14.6" fill="#dadada" stroke="#8a8a8a" stroke-width="0.5"/>
<rect x="527" y="314.2" width="5" height="19.5" fill="#c2c2c2"/>
<rect x="528.2" y="316.59999999999997" width="2.6" height="14.6" fill="#dadada" stroke="#8a8a8a" stroke-width="0.5"/>
<circle cx="433.2" cy="315.2" r="1.1" fill="#fff"/><circle cx="433.2" cy="332.59999999999997" r="1.1" fill="#fff"/>
<circle cx="530.4" cy="315.2" r="1.1" fill="#fff"/><circle cx="530.4" cy="332.59999999999997" r="1.1" fill="#fff"/>
<rect x="437" y="314.59999999999997" width="29.6" height="18.8" fill="#222"/>
<rect x="437" y="314.59999999999997" width="4.2" height="18.8" fill="#111"/>
<circle cx="439.1" cy="316.4" r="0.5" fill="#888"/><circle cx="439.1" cy="319.0" r="0.5" fill="#888"/>
<rect x="441.6" y="315.2" width="14.6" height="5.6" fill="#3a3a3a"/>
<rect x="441.6" y="316.4" width="14.6" height="1.2" fill="#8a8a8a"/>
<rect x="441.6" y="318.59999999999997" width="14.6" height="1.2" fill="#7a7a7a"/>
<rect x="456.2" y="315.2" width="5.8" height="5.6" fill="url(#tag)"/>
<rect x="462" y="315.2" width="4" height="5.6" fill="#1a1a1a"/>
<path d="M462.2 315.4 H465.8 V317.4 H463.4 Z" fill="#2fbf55"/>
<rect x="463" y="318.4" width="1.8" height="1.3" fill="#bbb"/>
<circle cx="439.1" cy="322.5" r="0.5" fill="#888"/><circle cx="439.1" cy="325.1" r="0.5" fill="#888"/>
<rect x="441.6" y="321.3" width="14.6" height="5.6" fill="#3a3a3a"/>
<rect x="441.6" y="322.5" width="14.6" height="1.2" fill="#8a8a8a"/>
<rect x="441.6" y="324.7" width="14.6" height="1.2" fill="#7a7a7a"/>
<rect x="456.2" y="321.3" width="5.8" height="5.6" fill="url(#tag)"/>
<rect x="462" y="321.3" width="4" height="5.6" fill="#1a1a1a"/>
<path d="M462.2 321.5 H465.8 V323.5 H463.4 Z" fill="#2fbf55"/>
<rect x="463" y="324.5" width="1.8" height="1.3" fill="#bbb"/>
<circle cx="439.1" cy="328.59999999999997" r="0.5" fill="#888"/><circle cx="439.1" cy="331.2" r="0.5" fill="#888"/>
<rect x="441.6" y="327.4" width="14.6" height="5.6" fill="#3a3a3a"/>
<rect x="441.6" y="328.59999999999997" width="14.6" height="1.2" fill="#8a8a8a"/>
<rect x="441.6" y="330.79999999999995" width="14.6" height="1.2" fill="#7a7a7a"/>
<rect x="456.2" y="327.4" width="5.8" height="5.6" fill="url(#tag)"/>
<rect x="462" y="327.4" width="4" height="5.6" fill="#1a1a1a"/>
<path d="M462.2 327.59999999999997 H465.8 V329.59999999999997 H463.4 Z" fill="#2fbf55"/>
<rect x="463" y="330.59999999999997" width="1.8" height="1.3" fill="#bbb"/>
<rect x="467.7" y="314.59999999999997" width="29.6" height="18.8" fill="#222"/>
<rect x="467.7" y="314.59999999999997" width="4.2" height="18.8" fill="#111"/>
<circle cx="469.8" cy="316.4" r="0.5" fill="#888"/><circle cx="469.8" cy="319.0" r="0.5" fill="#888"/>
<rect x="472.3" y="315.5" width="24.4" height="5.2" fill="#a8a8a8" stroke="#555" stroke-width="0.4"/>
<rect x="473.09999999999997" y="316.3" width="22.8" height="3.4" fill="#d2d2d2"/>
<circle cx="469.8" cy="322.5" r="0.5" fill="#888"/><circle cx="469.8" cy="325.1" r="0.5" fill="#888"/>
<rect x="472.3" y="321.3" width="14.6" height="5.6" fill="#3a3a3a"/>
<rect x="472.3" y="322.5" width="14.6" height="1.2" fill="#8a8a8a"/>
<rect x="472.3" y="324.7" width="14.6" height="1.2" fill="#7a7a7a"/>
<rect x="486.9" y="321.3" width="5.8" height="5.6" fill="url(#tag)"/>
<rect x="492.7" y="321.3" width="4" height="5.6" fill="#1a1a1a"/>
<path d="M492.9 321.5 H496.5 V323.5 H494.09999999999997 Z" fill="#2fbf55"/>
<rect x="493.7" y="324.5" width="1.8" height="1.3" fill="#bbb"/>
<circle cx="469.8" cy="328.59999999999997" r="0.5" fill="#888"/><circle cx="469.8" cy="331.2" r="0.5" fill="#888"/>
<rect x="472.3" y="327.4" width="14.6" height="5.6" fill="#3a3a3a"/>
<rect x="472.3" y="328.59999999999997" width="14.6" height="1.2" fill="#8a8a8a"/>
<rect x="472.3" y="330.79999999999995" width="14.6" height="1.2" fill="#7a7a7a"/>
<rect x="486.9" y="327.4" width="5.8" height="5.6" fill="url(#tag)"/>
<rect x="492.7" y="327.4" width="4" height="5.6" fill="#1a1a1a"/>
<path d="M492.9 327.59999999999997 H496.5 V329.59999999999997 H494.09999999999997 Z" fill="#2fbf55"/>
<rect x="493.7" y="330.59999999999997" width="1.8" height="1.3" fill="#bbb"/>
<rect x="498.3" y="314.59999999999997" width="29.6" height="18.8" fill="#222"/>
<rect x="498.3" y="314.59999999999997" width="4.2" height="18.8" fill="#111"/>
<circle cx="500.40000000000003" cy="316.4" r="0.5" fill="#888"/><circle cx="500.40000000000003" cy="319.0" r="0.5" fill="#888"/>
<rect x="502.90000000000003" y="315.2" width="14.6" height="5.6" fill="#3a3a3a"/>
<rect x="502.90000000000003" y="316.4" width="14.6" height="1.2" fill="#8a8a8a"/>
<rect x="502.90000000000003" y="318.59999999999997" width="14.6" height="1.2" fill="#7a7a7a"/>
<rect x="517.5" y="315.2" width="5.8" height="5.6" fill="url(#tag)"/>
<rect x="523.3" y="315.2" width="4" height="5.6" fill="#1a1a1a"/>
<path d="M523.5 315.4 H527.1 V317.4 H524.7 Z" fill="#2fbf55"/>
<rect x="524.3" y="318.4" width="1.8" height="1.3" fill="#bbb"/>
<circle cx="500.40000000000003" cy="322.5" r="0.5" fill="#888"/><circle cx="500.40000000000003" cy="325.1" r="0.5" fill="#888"/>
<rect x="502.90000000000003" y="321.3" width="14.6" height="5.6" fill="#3a3a3a"/>
<rect x="502.90000000000003" y="322.5" width="14.6" height="1.2" fill="#8a8a8a"/>
<rect x="502.90000000000003" y="324.7" width="14.6" height="1.2" fill="#7a7a7a"/>
<rect x="517.5" y="321.3" width="5.8" height="5.6" fill="url(#tag)"/>
<rect x="523.3" y="321.3" width="4" height="5.6" fill="#1a1a1a"/>
<path d="M523.5 321.5 H527.1 V323.5 H524.7 Z" fill="#2fbf55"/>
<rect x="524.3" y="324.5" width="1.8" height="1.3" fill="#bbb"/>
<circle cx="500.40000000000003" cy="328.59999999999997" r="0.5" fill="#888"/><circle cx="500.40000000000003" cy="331.2" r="0.5" fill="#888"/>
<rect x="502.90000000000003" y="327.4" width="14.6" height="5.6" fill="#3a3a3a"/>
<rect x="502.90000000000003" y="328.59999999999997" width="14.6" height="1.2" fill="#8a8a8a"/>
<rect x="502.90000000000003" y="330.79999999999995" width="14.6" height="1.2" fill="#7a7a7a"/>
<rect x="517.5" y="327.4" width="5.8" height="5.6" fill="url(#tag)"/>
<rect x="523.3" y="327.4" width="4" height="5.6" fill="#1a1a1a"/>
<path d="M523.5 327.59999999999997 H527.1 V329.59999999999997 H524.7 Z" fill="#2fbf55"/>
<rect x="524.3" y="330.59999999999997" width="1.8" height="1.3" fill="#bbb"/>
<rect x="431.4" y="342.8" width="101.4" height="21.6" fill="#b4b4b4" stroke="#555" stroke-width="0.9"/>
<rect x="442.8" y="343.6" width="56" height="10.4" fill="#3c3c3c" stroke="#222" stroke-width="0.5"/>
<rect x="447.3" y="355.8" width="3.8" height="2.8" rx="0.8" fill="#e8e8e8" stroke="#666" stroke-width="0.5"/>
<rect x="454.3" y="355.8" width="3.8" height="2.8" rx="0.8" fill="#e8e8e8" stroke="#666" stroke-width="0.5"/>
<rect x="461.3" y="355.8" width="3.8" height="2.8" rx="0.8" fill="#e8e8e8" stroke="#666" stroke-width="0.5"/>
<rect x="468.3" y="355.8" width="3.8" height="2.8" rx="0.8" fill="#e8e8e8" stroke="#666" stroke-width="0.5"/>
<rect x="475.3" y="355.8" width="3.8" height="2.8" rx="0.8" fill="#e8e8e8" stroke="#666" stroke-width="0.5"/>
<rect x="483" y="356.2" width="14" height="2" fill="#eee" stroke="#777" stroke-width="0.4"/>
<rect x="486" y="360" width="6" height="1.2" fill="#888"/>
<rect x="505.8" y="343.6" width="16.8" height="17.6" fill="#3a3a3a"/>
<rect x="506.6" y="344.4" width="15.2" height="7.6" fill="#d0d0d0"/>
<rect x="506.6" y="352.8" width="15.2" height="7.6" fill="#c4c4c4"/>
<circle cx="434.4" cy="345.6" r="1.2" fill="#fff" stroke="#777" stroke-width="0.5"/>
<circle cx="434.4" cy="361.4" r="1.2" fill="#fff" stroke="#777" stroke-width="0.5"/>
<circle cx="529.6" cy="345.6" r="1.2" fill="#fff" stroke="#777" stroke-width="0.5"/>
<circle cx="529.6" cy="361.4" r="1.2" fill="#fff" stroke="#777" stroke-width="0.5"/>
<rect x="431.4" y="392.4" width="101.4" height="20.8" fill="#9c9c9c" stroke="#555" stroke-width="0.9"/>
<rect x="432" y="393.0" width="7.2" height="19.6" fill="#b4b4b4"/>
<rect x="433.6" y="395.4" width="3" height="14.8" fill="#e6e6e6" stroke="#888" stroke-width="0.5"/>
<rect x="524.8" y="393.0" width="7.4" height="19.6" fill="#b4b4b4"/>
<rect x="527" y="395.4" width="3" height="14.8" fill="#e6e6e6" stroke="#888" stroke-width="0.5"/>
<circle cx="433.4" cy="394.0" r="1" fill="#fff"/><circle cx="433.4" cy="411.59999999999997" r="1" fill="#fff"/>
<circle cx="530.6" cy="394.0" r="1" fill="#fff"/><circle cx="530.6" cy="411.59999999999997" r="1" fill="#fff"/>
<rect x="440" y="393.59999999999997" width="18.2" height="18.4" fill="url(#mesh)"/>
<rect x="477.8" y="393.59999999999997" width="46.6" height="18.4" fill="url(#mesh)"/>
<rect x="458.6" y="393.2" width="18.8" height="19.2" fill="#a4a4a4" stroke="#666" stroke-width="0.4"/>
<rect x="460.2" y="394.79999999999995" width="14.8" height="8.8" fill="#333"/>
<rect x="461" y="395.59999999999997" width="13.2" height="7.2" fill="url(#blcd)"/>
<rect x="460.6" y="405.0" width="2.2" height="2" fill="#eee" stroke="#555" stroke-width="0.3"/><rect x="464" y="405.0" width="10" height="2" fill="#6a6a6a"/>
<rect x="460.6" y="408.2" width="2.2" height="2" fill="#555"/><rect x="464" y="408.2" width="10" height="2" fill="#d8d8d8" stroke="#666" stroke-width="0.3"/>
<rect x="431.4" y="413.2" width="101.4" height="20.8" fill="#9c9c9c" stroke="#555" stroke-width="0.9"/>
<rect x="432" y="413.8" width="7.2" height="19.6" fill="#b4b4b4"/>
<rect x="433.6" y="416.2" width="3" height="14.8" fill="#e6e6e6" stroke="#888" stroke-width="0.5"/>
<rect x="524.8" y="413.8" width="7.4" height="19.6" fill="#b4b4b4"/>
<rect x="527" y="416.2" width="3" height="14.8" fill="#e6e6e6" stroke="#888" stroke-width="0.5"/>
<circle cx="433.4" cy="414.8" r="1" fill="#fff"/><circle cx="433.4" cy="432.4" r="1" fill="#fff"/>
<circle cx="530.6" cy="414.8" r="1" fill="#fff"/><circle cx="530.6" cy="432.4" r="1" fill="#fff"/>
<rect x="440" y="414.4" width="18.2" height="18.4" fill="url(#mesh)"/>
<rect x="477.8" y="414.4" width="46.6" height="18.4" fill="url(#mesh)"/>
<rect x="458.6" y="414.0" width="18.8" height="19.2" fill="#a4a4a4" stroke="#666" stroke-width="0.4"/>
<rect x="460.2" y="415.59999999999997" width="14.8" height="8.8" fill="#333"/>
<rect x="461" y="416.4" width="13.2" height="7.2" fill="url(#blcd)"/>
<rect x="460.6" y="425.8" width="2.2" height="2" fill="#eee" stroke="#555" stroke-width="0.3"/><rect x="464" y="425.8" width="10" height="2" fill="#6a6a6a"/>
<rect x="460.6" y="429.0" width="2.2" height="2" fill="#555"/><rect x="464" y="429.0" width="10" height="2" fill="#d8d8d8" stroke="#666" stroke-width="0.3"/>
<text x="409.4" y="165.5" text-anchor="end" font-family="Liberation Sans" font-size="11.3" fill="#111" stroke="#111" stroke-width="0.28">6U</text>
<text x="409.4" y="212" text-anchor="end" font-family="Liberation Sans" font-size="11.3" fill="#111" stroke="#111" stroke-width="0.28">1U</text>
<text x="409.4" y="246.2" text-anchor="end" font-family="Liberation Sans" font-size="11.3" fill="#111" stroke="#111" stroke-width="0.28">4U</text>
<text x="409.4" y="287.6" text-anchor="end" font-family="Liberation Sans" font-size="11.3" fill="#111" stroke="#111" stroke-width="0.28">2U</text>
<text x="409.4" y="307.4" text-anchor="end" font-family="Liberation Sans" font-size="11.3" fill="#111" stroke="#111" stroke-width="0.28">2U</text>
<text x="409.4" y="327.2" text-anchor="end" font-family="Liberation Sans" font-size="11.3" fill="#111" stroke="#111" stroke-width="0.28">2U</text>
<text x="409.4" y="356.7" text-anchor="end" font-family="Liberation Sans" font-size="11.3" fill="#111" stroke="#111" stroke-width="0.28">2U</text>
<text x="409.4" y="407.8" text-anchor="end" font-family="Liberation Sans" font-size="11.3" fill="#111" stroke="#111" stroke-width="0.28">2U</text>
<text x="409.4" y="428.2" text-anchor="end" font-family="Liberation Sans" font-size="11.3" fill="#111" stroke="#111" stroke-width="0.28">2U</text>
<text x="554.8" y="165.3" font-family="Liberation Sans" font-size="11.3" fill="#111" stroke="#111" stroke-width="0.28">Monitor</text>
<text x="554.8" y="211.8" font-family="Liberation Sans" font-size="11.3" fill="#111" stroke="#111" stroke-width="0.28">Patch Panel</text>
<text x="554.8" y="246.2" font-family="Liberation Sans" font-size="11.3" fill="#111" stroke="#111" stroke-width="0.28">Router</text>
<text x="554.8" y="287" font-family="Liberation Sans" font-size="11.3" fill="#111" stroke="#111" stroke-width="0.28">Server</text>
<text x="554.8" y="306.5" font-family="Liberation Sans" font-size="11.3" fill="#111" stroke="#111" stroke-width="0.28">Server</text>
<text x="554.8" y="326.9" font-family="Liberation Sans" font-size="11.3" fill="#111" stroke="#111" stroke-width="0.28">Server</text>
<text x="555.4" y="407.4" font-family="Liberation Sans" font-size="11.3" fill="#111" stroke="#111" stroke-width="0.28">UPS</text>
<text x="555.4" y="427.8" font-family="Liberation Sans" font-size="11.3" fill="#111" stroke="#111" stroke-width="0.28">UPS</text>
<text x="553" y="356.6" font-family="Liberation Sans" font-size="11.3" fill="#333" stroke="#333" stroke-width="0.2" textLength="71" lengthAdjust="spacingAndGlyphs">2U Tape Drive</text>
<text x="481" y="481.8" text-anchor="middle" font-family="Liberation Sans" font-size="11.3" fill="#111" stroke="#111" stroke-width="0.28">30U</text>
</svg><!--/RACK-->
<!--PANELS--><div class="abs" style="left:29px;top:131px;width:180px;height:146px;background:#fff;border-radius:3px;box-shadow:0 2px 10px rgba(0,0,0,0.055)"></div>
<svg class="abs" style="left:0;top:0" width="930" height="500" viewBox="0 0 930 500">
<rect x="40.8" y="144.8" width="62.1" height="36" fill="#f3f3f3"/>
<rect x="111" y="145" width="54" height="35.8" fill="#f3f3f3"/>
<path d="M59.00 153.40 L59.00 158.40 M59.00 167.30 L59.00 172.40 M49.50 162.30 L54.80 162.30 M63.50 162.30 L69.30 162.30 M51.40 155.60 L55.60 159.20 M66.00 157.00 L62.00 160.00 M53.40 169.60 L56.50 165.40 M59.50 163.20 L66.50 170.40 " stroke="#4a4a4a" stroke-width="1.4" stroke-linecap="butt" fill="none"/>
<path d="M88.8 161.4 H93.6 L91.2 164.2 Z" fill="#555"/>
<g stroke="#333" stroke-width="1" fill="none"><path d="M136.4 153 L136.4 149.4 M136.4 153 L132.8 152.3 M136.4 153 L140 152.3 M136.4 153 L134.2 156.4 M136.4 153 L138.6 156.4"/><circle cx="136.4" cy="148.1" r="1.45" fill="#f3f3f3"/><circle cx="131.5" cy="152" r="1.45" fill="#f3f3f3"/><circle cx="141.3" cy="152" r="1.45" fill="#f3f3f3"/><circle cx="133.5" cy="157.6" r="1.45" fill="#f3f3f3"/><circle cx="139.3" cy="157.6" r="1.45" fill="#f3f3f3"/></g><circle cx="136.4" cy="153" r="1.2" fill="#333"/>
<text x="114" y="167.8" font-family="Liberation Sans" font-size="8.2" fill="#333" stroke="#333" stroke-width="0.1" textLength="45.5" lengthAdjust="spacingAndGlyphs">Create Smart</text>
<text x="125.8" y="177.6" font-family="Liberation Sans" font-size="8.2" fill="#333" stroke="#333" stroke-width="0.1" textLength="21.5" lengthAdjust="spacingAndGlyphs">Shape</text>
<rect x="42.4" y="190.5" width="155.3" height="68.2" fill="#fff" stroke="#e6e6e6" stroke-width="1"/>
<rect x="42.9" y="200.5" width="154.3" height="26.1" fill="#f3f3f3"/>
<path d="M59.30 204.70 L59.30 209.70 M59.30 218.60 L59.30 223.70 M49.80 213.60 L55.10 213.60 M63.80 213.60 L69.60 213.60 M51.70 206.90 L55.90 210.50 M66.30 208.30 L62.30 211.30 M53.70 220.90 L56.80 216.70 M59.80 214.50 L66.80 221.70 " stroke="#444" stroke-width="1.4" stroke-linecap="butt" fill="none"/>
<text x="81" y="217.7" font-family="Liberation Sans" font-size="15.4" fill="#2b2b2b" stroke="#2b2b2b" stroke-width="0.2" letter-spacing="0.05">Auto Formatting</text>
<rect x="49.5" y="238" width="19.2" height="9.8" rx="4.9" fill="#ececec"/>
<rect x="85.1" y="238" width="105.5" height="9.8" rx="4.9" fill="#ececec"/>
<path d="M156.4 225 L170.4 235.4 L163.6 237.8 Q162.6 238.1 162 239 L157.2 244.2 Z" fill="#2356f6" stroke="#2356f6" stroke-width="2.2" stroke-linejoin="round"/>
</svg>
<div class="abs" style="left:768px;top:139px;width:136px;height:275.5px;background:#f3f3f3;border-radius:6px;box-shadow:0 1px 6px rgba(0,0,0,0.07);overflow:hidden"><div class="abs" style="left:0;top:0;width:14px;height:276px;background:#f6f6f6;border-right:1px solid #e9e9e9"></div><div class="abs" style="left:14px;top:0;width:123px;height:12.8px;background:#dedede"></div><div class="abs" style="left:0;top:32.5px;width:14px;height:15.3px;background:#1a7cf5"></div></div>
<svg class="abs" style="left:0;top:0" width="930" height="500" viewBox="0 0 930 500">
<text x="845.3" y="148" text-anchor="middle" font-family="Liberation Sans" font-size="6.6" font-weight="bold" fill="#111" textLength="19.2" lengthAdjust="spacingAndGlyphs">Theme</text>
<g fill="none" stroke="#444" stroke-width="0.9" stroke-linejoin="round" stroke-linecap="round"><path d="M771.8 142.6 L774 144.9 L771.8 147.2 M774.6 142.6 L776.8 144.9 L774.6 147.2" stroke="#888"/><path d="M771 159.4 L774 156.4 L777.4 159.8 L774.4 162.8 Z" fill="none"/><path d="M771.2 159.6 H777.2 L774.4 162.6 Z" fill="#333" stroke="none"/><path d="M772.6 155.6 L774 157"/><circle cx="778" cy="162.3" r="0.6" fill="#333" stroke="none"/><g stroke="#fff" stroke-width="0.9"><rect x="771" y="175.3" width="3.2" height="3.2" rx="0.9"/><rect x="775.2" y="175.3" width="3.2" height="3.2" rx="0.9"/><rect x="771" y="179.5" width="3.2" height="3.2" rx="0.9"/><rect x="775.2" y="179.5" width="3.2" height="3.2" rx="0.9"/></g><rect x="771" y="195.4" width="7.6" height="6" rx="0.6"/><path d="M772 200.6 L774 198.4 L775.4 199.8 L776.4 198.8 L777.6 200.6 Z" fill="#444" stroke="none"/><path d="M770.8 217.2 L774.8 214.8 L778.8 217.2 L774.8 219.6 Z M770.8 219.4 L774.8 221.8 L778.8 219.4"/><path d="M771.4 234.2 H776 L778 236.2 V242.2 H771.4 Z M772.8 237.8 H776.6 M772.8 240 H776.6"/><path d="M771.2 253.4 H777.8 V261 H771.2 Z"/><path d="M772.4 254.6 H774.6 V256.8 H772.4 Z M775 257.6 H777 V260 H775 Z" fill="#444" stroke="none"/><path d="M771.2 274.2 L773.2 276.2 M778.4 274.2 L776.4 276.2 M771.2 280.6 L773.2 278.6 M778.4 280.6 L776.4 278.6 M773.4 277.4 H776.2" /><path d="M770.8 293.4 H778.8 M771.6 293.4 V299.6 L773 298.6 H776.6 L778 299.6 V293.4"/><path d="M774 295.2 L776 296.4 L774 297.6 Z" fill="#444" stroke="none"/><path d="M771.4 315.4 A3.6 3.6 0 1 0 772.4 313" /><path d="M770.8 312.2 L771.6 314.6 L773.8 313.6" /><path d="M775 314.2 V316.4 L776.6 317.4"/></g>
<rect x="789.5" y="158.5" width="57" height="57" fill="#fff" stroke="#ebebeb" stroke-width="0.8"/>
<g fill="#fff" stroke="#555" stroke-width="0.7"><path d="M807.8 172 L816.8 177.8 L807.8 183.6 L798.8 177.8 Z"/><rect x="800" y="192" width="14.6" height="11.8" rx="2"/><path d="M826.4 179.8 H842 L839.2 189.4 H823.6 Z"/></g><path d="M807.8 183.6 V190.4 M814.6 197.6 H831.5 V191" stroke="#333" stroke-width="0.7" fill="none"/><path d="M806.4 189.6 H809.2 L807.8 192 Z M830.1 191.4 H832.9 L831.5 188.9 Z" fill="#333"/>
<text x="807.8" y="179.2" font-size="4" font-family="Liberation Sans" fill="#444" stroke="#444" stroke-width="0.1" text-anchor="middle">text</text>
<text x="807.3" y="199.4" font-size="4" font-family="Liberation Sans" fill="#444" stroke="#444" stroke-width="0.1" text-anchor="middle">text</text>
<text x="832.8" y="186" font-size="4" font-family="Liberation Sans" fill="#444" stroke="#444" stroke-width="0.1" text-anchor="middle">text</text>
<text x="823.6" y="203.6" font-size="4.6" font-family="Liberation Sans" fill="#444" stroke="#444" stroke-width="0.1" text-anchor="middle">text</text>
<g><rect x="858.2" y="162.4" width="2.7" height="2.8" rx="0.4" fill="#2e9a5a"/><rect x="861.2" y="162.4" width="2.7" height="2.8" rx="0.4" fill="#455a64"/><rect x="864.2" y="162.4" width="2.7" height="2.8" rx="0.4" fill="#2f7de1"/><rect x="858.2" y="165.6" width="2.7" height="2.8" rx="0.4" fill="#d2455f"/><rect x="861.2" y="165.6" width="2.7" height="2.8" rx="0.4" fill="#f07a2a"/><rect x="864.2" y="165.6" width="2.7" height="2.8" rx="0.4" fill="#7b4fa0"/></g>
<text x="856.4" y="183.2" font-family="Liberation Sans" font-size="8" fill="#333">Aa</text>
<path d="M858.6 191.4 H860.6 V196.4 H864.8" stroke="#333" stroke-width="0.8" fill="none"/><rect x="858" y="190.8" width="1.2" height="1.2" fill="#333"/><rect x="865.2" y="195.8" width="1.2" height="1.2" fill="#333"/>
<path d="M858.2 204.6 H864.6 L866.4 206.4 V212 H858.2 Z M859.8 204.6 V207.4 H864 V204.6" stroke="#333" stroke-width="0.8" fill="none"/>
<text x="871.8" y="167.6" font-family="Liberation Sans" font-size="5.2" fill="#444" stroke="#444" stroke-width="0.12">General</text>
<text x="871.8" y="182.2" font-family="Liberation Sans" font-size="5.2" fill="#444" stroke="#444" stroke-width="0.12">Arial</text>
<text x="871.8" y="196" font-family="Liberation Sans" font-size="5.2" fill="#444" stroke="#444" stroke-width="0.12">General 1</text>
<text x="871.8" y="210.2" font-family="Liberation Sans" font-size="5.2" fill="#444" stroke="#444" stroke-width="0.12">Save The...</text>
<rect x="816.6" y="222.2" width="27.4" height="26.8" fill="#dcdcdc"/>
<g fill="none" stroke="#444" stroke-width="0.8"><rect x="798.6" y="225.6" width="3.2" height="3.2" rx="0.6"/><rect x="803" y="225.6" width="3.2" height="3.2" rx="0.6"/><rect x="798.6" y="230" width="3.2" height="3.2" rx="0.6"/><rect x="803" y="230" width="3.2" height="3.2" rx="0.6"/></g>
<rect x="825.8" y="225.4" width="8.8" height="7.8" rx="1" fill="#5a5a5a"/><path d="M826.4 228 H834 M826.4 230.6 H834 M828.7 226 V232.6 M831.7 226 V232.6" stroke="#b8b8b8" stroke-width="0.6"/>
<path d="M854.4 226.4 H856.8 V232.2 H860.2" stroke="#444" stroke-width="0.8" fill="none"/><rect x="853.6" y="225.8" width="1.2" height="1.2" fill="#333"/><rect x="860.2" y="231.6" width="1.2" height="1.2" fill="#333"/>
<text x="885" y="233.2" text-anchor="middle" font-family="Liberation Sans" font-size="8" fill="#333">Aa</text>
<text x="803" y="243.6" font-family="Liberation Sans" font-size="5.6" fill="#333" stroke="#333" stroke-width="0.12" text-anchor="middle">Theme</text>
<text x="830.2" y="243.6" font-family="Liberation Sans" font-size="5.6" fill="#333" stroke="#333" stroke-width="0.12" text-anchor="middle">Color</text>
<text x="857.6" y="243.6" font-family="Liberation Sans" font-size="5.6" fill="#333" stroke="#333" stroke-width="0.12" text-anchor="middle">Connector</text>
<text x="885" y="243.6" font-family="Liberation Sans" font-size="5.6" fill="#333" stroke="#333" stroke-width="0.12" text-anchor="middle">Text</text>
<rect x="789.4" y="256.5" width="109.2" height="11.8" fill="none" stroke="#bcbcbc" stroke-width="0.7" stroke-dasharray="2.2 1.6"/>
<path d="M840.2 262.4 H847.2 M843.7 258.9 V265.9" stroke="#444" stroke-width="0.9"/>
<rect x="789" y="277.4" width="110" height="12.2" fill="#dadada"/>
<rect x="789.20" y="279.80" width="6.4" height="6.9" fill="#d6d2b4"/>
<rect x="796.40" y="279.80" width="6.4" height="6.9" fill="#9db6dc"/>
<rect x="803.60" y="279.80" width="6.4" height="6.9" fill="#bcbcbc"/>
<rect x="810.80" y="279.80" width="6.4" height="6.9" fill="#d99b9b"/>
<rect x="818.00" y="279.80" width="6.4" height="6.9" fill="#c9d9a2"/>
<rect x="825.20" y="279.80" width="6.4" height="6.9" fill="#b1a3cf"/>
<rect x="832.40" y="279.80" width="6.4" height="6.9" fill="#9ed0e0"/>
<rect x="839.60" y="279.80" width="6.4" height="6.9" fill="#f5c190"/>
<rect x="846.80" y="279.80" width="6.4" height="6.9" fill="#d5d1b2"/>
<rect x="854.00" y="279.80" width="6.4" height="6.9" fill="#9eb6e0"/>
<text x="862" y="285.70" font-family="Liberation Sans" font-size="5.4" fill="#2a2a2a" stroke="#2a2a2a" stroke-width="0.12">General</text>
<rect x="789.20" y="292.38" width="6.4" height="6.9" fill="#f04545"/>
<rect x="796.40" y="292.38" width="6.4" height="6.9" fill="#3e8ef0"/>
<rect x="803.60" y="292.38" width="6.4" height="6.9" fill="#ffbf00"/>
<rect x="810.80" y="292.38" width="6.4" height="6.9" fill="#2ea450"/>
<rect x="818.00" y="292.38" width="6.4" height="6.9" fill="#3b42f0"/>
<rect x="825.20" y="292.38" width="6.4" height="6.9" fill="#e00000"/>
<rect x="832.40" y="292.38" width="6.4" height="6.9" fill="#7a52e0"/>
<rect x="839.60" y="292.38" width="6.4" height="6.9" fill="#e0129c"/>
<rect x="846.80" y="292.38" width="6.4" height="6.9" fill="#1aaef5"/>
<rect x="854.00" y="292.38" width="6.4" height="6.9" fill="#ff7100"/>
<text x="862" y="298.28" font-family="Liberation Sans" font-size="5.4" fill="#2a2a2a" stroke="#2a2a2a" stroke-width="0.12">Charm</text>
<rect x="789.20" y="304.96" width="6.4" height="6.9" fill="#1f8a50"/>
<rect x="796.40" y="304.96" width="6.4" height="6.9" fill="#f5c852"/>
<rect x="803.60" y="304.96" width="6.4" height="6.9" fill="#f0a052"/>
<rect x="810.80" y="304.96" width="6.4" height="6.9" fill="#e85656"/>
<rect x="818.00" y="304.96" width="6.4" height="6.9" fill="#3081e0"/>
<rect x="825.20" y="304.96" width="6.4" height="6.9" fill="#9052d8"/>
<rect x="832.40" y="304.96" width="6.4" height="6.9" fill="#21a262"/>
<rect x="839.60" y="304.96" width="6.4" height="6.9" fill="#2e9ad8"/>
<rect x="846.80" y="304.96" width="6.4" height="6.9" fill="#c271e0"/>
<rect x="854.00" y="304.96" width="6.4" height="6.9" fill="#20d0d0"/>
<text x="862" y="310.86" font-family="Liberation Sans" font-size="5.4" fill="#2a2a2a" stroke="#2a2a2a" stroke-width="0.12">Antique</text>
<rect x="789.20" y="317.54" width="6.4" height="6.9" fill="#ffbf00"/>
<rect x="796.40" y="317.54" width="6.4" height="6.9" fill="#72b0a0"/>
<rect x="803.60" y="317.54" width="6.4" height="6.9" fill="#82a2f0"/>
<rect x="810.80" y="317.54" width="6.4" height="6.9" fill="#c282f0"/>
<rect x="818.00" y="317.54" width="6.4" height="6.9" fill="#72c222"/>
<rect x="825.20" y="317.54" width="6.4" height="6.9" fill="#ff9282"/>
<rect x="832.40" y="317.54" width="6.4" height="6.9" fill="#f05292"/>
<rect x="839.60" y="317.54" width="6.4" height="6.9" fill="#ff7100"/>
<rect x="846.80" y="317.54" width="6.4" height="6.9" fill="#ff92f0"/>
<rect x="854.00" y="317.54" width="6.4" height="6.9" fill="#92b292"/>
<text x="862" y="323.44" font-family="Liberation Sans" font-size="5.4" fill="#2a2a2a" stroke="#2a2a2a" stroke-width="0.12">Fresh</text>
<rect x="789.20" y="330.12" width="6.4" height="6.9" fill="#c252b2"/>
<rect x="796.40" y="330.12" width="6.4" height="6.9" fill="#42b2e0"/>
<rect x="803.60" y="330.12" width="6.4" height="6.9" fill="#f06262"/>
<rect x="810.80" y="330.12" width="6.4" height="6.9" fill="#42c282"/>
<rect x="818.00" y="330.12" width="6.4" height="6.9" fill="#f5c252"/>
<rect x="825.20" y="330.12" width="6.4" height="6.9" fill="#e84272"/>
<rect x="832.40" y="330.12" width="6.4" height="6.9" fill="#3252a2"/>
<rect x="839.60" y="330.12" width="6.4" height="6.9" fill="#f08242"/>
<rect x="846.80" y="330.12" width="6.4" height="6.9" fill="#7272f0"/>
<rect x="854.00" y="330.12" width="6.4" height="6.9" fill="#32a282"/>
<text x="862" y="336.02" font-family="Liberation Sans" font-size="5.4" fill="#2a2a2a" stroke="#2a2a2a" stroke-width="0.12">Live</text>
<rect x="789.20" y="342.70" width="6.4" height="6.9" fill="#1f2f6a"/>
<rect x="796.40" y="342.70" width="6.4" height="6.9" fill="#5a82f0"/>
<rect x="803.60" y="342.70" width="6.4" height="6.9" fill="#42a898"/>
<rect x="810.80" y="342.70" width="6.4" height="6.9" fill="#42c8d0"/>
<rect x="818.00" y="342.70" width="6.4" height="6.9" fill="#f05a5a"/>
<rect x="825.20" y="342.70" width="6.4" height="6.9" fill="#f0c842"/>
<rect x="832.40" y="342.70" width="6.4" height="6.9" fill="#f08242"/>
<rect x="839.60" y="342.70" width="6.4" height="6.9" fill="#32c242"/>
<rect x="846.80" y="342.70" width="6.4" height="6.9" fill="#f062c8"/>
<rect x="854.00" y="342.70" width="6.4" height="6.9" fill="#f08a52"/>
<text x="862" y="348.60" font-family="Liberation Sans" font-size="5.4" fill="#2a2a2a" stroke="#2a2a2a" stroke-width="0.12">Crystal</text>
<rect x="789.20" y="355.28" width="6.4" height="6.9" fill="#3272c8"/>
<rect x="796.40" y="355.28" width="6.4" height="6.9" fill="#f57262"/>
<rect x="803.60" y="355.28" width="6.4" height="6.9" fill="#4292f0"/>
<rect x="810.80" y="355.28" width="6.4" height="6.9" fill="#62d8d0"/>
<rect x="818.00" y="355.28" width="6.4" height="6.9" fill="#f5c252"/>
<rect x="825.20" y="355.28" width="6.4" height="6.9" fill="#f05252"/>
<rect x="832.40" y="355.28" width="6.4" height="6.9" fill="#a2c232"/>
<rect x="839.60" y="355.28" width="6.4" height="6.9" fill="#9262e0"/>
<rect x="846.80" y="355.28" width="6.4" height="6.9" fill="#52c8f0"/>
<rect x="854.00" y="355.28" width="6.4" height="6.9" fill="#e052a2"/>
<text x="862" y="361.18" font-family="Liberation Sans" font-size="5.4" fill="#2a2a2a" stroke="#2a2a2a" stroke-width="0.12">Broad</text>
<rect x="789.20" y="367.86" width="6.4" height="6.9" fill="#ff9252"/>
<rect x="796.40" y="367.86" width="6.4" height="6.9" fill="#ffc842"/>
<rect x="803.60" y="367.86" width="6.4" height="6.9" fill="#42d0e0"/>
<rect x="810.80" y="367.86" width="6.4" height="6.9" fill="#f05a5a"/>
<rect x="818.00" y="367.86" width="6.4" height="6.9" fill="#b2d042"/>
<rect x="825.20" y="367.86" width="6.4" height="6.9" fill="#9252e0"/>
<rect x="832.40" y="367.86" width="6.4" height="6.9" fill="#42c2f0"/>
<rect x="839.60" y="367.86" width="6.4" height="6.9" fill="#e052a2"/>
<rect x="846.80" y="367.86" width="6.4" height="6.9" fill="#5272e0"/>
<rect x="854.00" y="367.86" width="6.4" height="6.9" fill="#42c252"/>
<text x="862" y="373.76" font-family="Liberation Sans" font-size="5.4" fill="#2a2a2a" stroke="#2a2a2a" stroke-width="0.12">Sprinkle</text>
<rect x="789.20" y="380.44" width="6.4" height="6.9" fill="#52a2f0"/>
<rect x="796.40" y="380.44" width="6.4" height="6.9" fill="#9262e0"/>
<rect x="803.60" y="380.44" width="6.4" height="6.9" fill="#b2e062"/>
<rect x="810.80" y="380.44" width="6.4" height="6.9" fill="#42a262"/>
<rect x="818.00" y="380.44" width="6.4" height="6.9" fill="#62d8c2"/>
<rect x="825.20" y="380.44" width="6.4" height="6.9" fill="#4252e0"/>
<rect x="832.40" y="380.44" width="6.4" height="6.9" fill="#9272f0"/>
<rect x="839.60" y="380.44" width="6.4" height="6.9" fill="#42d8a2"/>
<rect x="846.80" y="380.44" width="6.4" height="6.9" fill="#42b292"/>
<rect x="854.00" y="380.44" width="6.4" height="6.9" fill="#62c262"/>
<text x="862" y="386.34" font-family="Liberation Sans" font-size="5.4" fill="#2a2a2a" stroke="#2a2a2a" stroke-width="0.12">Tranquil</text>
<rect x="789.20" y="393.02" width="6.4" height="6.9" fill="#f05a42"/>
<rect x="796.40" y="393.02" width="6.4" height="6.9" fill="#f09252"/>
<rect x="803.60" y="393.02" width="6.4" height="6.9" fill="#f0c852"/>
<rect x="810.80" y="393.02" width="6.4" height="6.9" fill="#1f6a42"/>
<rect x="818.00" y="393.02" width="6.4" height="6.9" fill="#62b842"/>
<rect x="825.20" y="393.02" width="6.4" height="6.9" fill="#82d052"/>
<rect x="832.40" y="393.02" width="6.4" height="6.9" fill="#d8e052"/>
<rect x="839.60" y="393.02" width="6.4" height="6.9" fill="#32a2b2"/>
<rect x="846.80" y="393.02" width="6.4" height="6.9" fill="#72c8b8"/>
<rect x="854.00" y="393.02" width="6.4" height="6.9" fill="#72e0c8"/>
<text x="862" y="398.92" font-family="Liberation Sans" font-size="5.4" fill="#2a2a2a" stroke="#2a2a2a" stroke-width="0.12">Opulent</text>
<rect x="789.20" y="405.60" width="6.4" height="6.9" fill="#8252f0"/>
<rect x="796.40" y="405.60" width="6.4" height="6.9" fill="#b2e042"/>
<rect x="803.60" y="405.60" width="6.4" height="6.9" fill="#42b292"/>
<rect x="810.80" y="405.60" width="6.4" height="6.9" fill="#f0c242"/>
<rect x="818.00" y="405.60" width="6.4" height="6.9" fill="#f06292"/>
<rect x="825.20" y="405.60" width="6.4" height="6.9" fill="#62a8f0"/>
<rect x="832.40" y="405.60" width="6.4" height="6.9" fill="#f07262"/>
<rect x="839.60" y="405.60" width="6.4" height="6.9" fill="#52d0c2"/>
<rect x="846.80" y="405.60" width="6.4" height="6.9" fill="#9262f0"/>
<rect x="854.00" y="405.60" width="6.4" height="6.9" fill="#52d8f0"/>
<text x="862" y="411.50" font-family="Liberation Sans" font-size="5.4" fill="#2a2a2a" stroke="#2a2a2a" stroke-width="0.12">Placid</text>
</svg>
<div class="abs" style="left:767px;top:429.7px;width:75px;height:26.6px;background:#fff;border-radius:5px;box-shadow:0 1px 5px rgba(0,0,0,0.12)"></div>
<svg class="abs" style="left:0;top:0" width="930" height="500" viewBox="0 0 930 500">
<path d="M779.2 439 V436.4 H781.8 M788.6 436.4 H791.2 V439 M791.2 447.6 V450.2 H788.6 M781.8 450.2 H779.2 V447.6" stroke="#2356f6" stroke-width="1.2" fill="none"/>
<path d="M783.4 439.2 H786.6 L788.2 440.8 V447.2 H783.4 Z" fill="#2356f6"/>
<text x="798.4" y="448" font-family="Liberation Sans" font-size="11.6" fill="#2356f6">Focus</text>
<path d="M834 448.8 L856.8 460.2 L848.4 463.8 Q847.2 464.3 846.6 465.4 L839.6 473.6 Z" fill="#2356f6" stroke="#2356f6" stroke-width="2.4" stroke-linejoin="round"/>
</svg><!--/PANELS-->
</body></html>
